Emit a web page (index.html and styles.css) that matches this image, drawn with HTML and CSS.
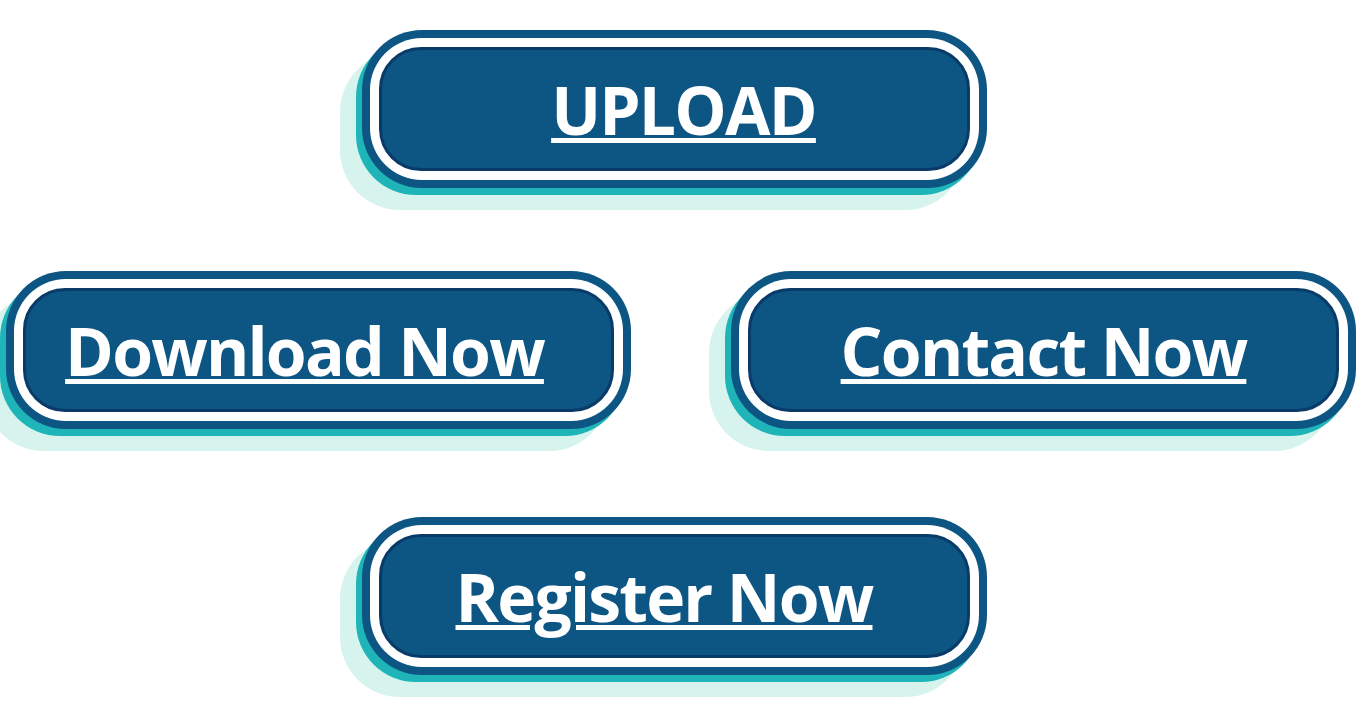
FILE: index.html
```html
<!DOCTYPE html>
<html>
<head>
<meta charset="utf-8">
<link rel="stylesheet" href="styles.css">
</head>
<body>
<main class="page">
  <div class="row row-top">
    <a class="btn" href="#"><span class="ring"><span class="face"><span class="label label-upload">UPLOAD</span></span></span></a>
  </div>
  <div class="row row-mid">
    <a class="btn" href="#"><span class="ring"><span class="face"><span class="label label-download">Download Now</span></span></span></a>
    <a class="btn" href="#"><span class="ring"><span class="face"><span class="label label-contact">Contact Now</span></span></span></a>
  </div>
  <div class="row row-bottom">
    <a class="btn" href="#"><span class="ring"><span class="face"><span class="label label-register">Register Now</span></span></span></a>
  </div>
</main>
</body>
</html>
```
FILE: styles.css
```css
html, body {
  margin: 0;
  padding: 0;
  background: #ffffff;
}
.page {
  display: flex;
  flex-direction: column;
  padding-top: 30px;
  width: 1361px;
  height: 704px;
  box-sizing: border-box;
  overflow: hidden;
}
.row {
  display: flex;
}
.row-top {
  padding-left: 362px;
}
.row-mid {
  margin-top: 83px;
  padding-left: 6px;
  gap: 100px;
}
.row-bottom {
  margin-top: 88px;
  padding-left: 362px;
}
.btn {
  display: block;
  width: 625px;
  height: 158px;
  box-sizing: border-box;
  padding: 8px;
  border-radius: 60px;
  background: #0d5583;
  box-shadow: -6px 7px 0 0 #1eb4b8, -22px 22px 0 0 #d6f3ed;
  text-decoration: none;
}
.ring {
  display: block;
  height: 100%;
  box-sizing: border-box;
  padding: 9px;
  border-radius: 52px;
  background: #ffffff;
}
.face {
  display: flex;
  align-items: center;
  justify-content: center;
  height: 100%;
  box-sizing: border-box;
  border: 3px solid #0a3b68;
  border-radius: 42px;
  background: #0d5583;
}
.label {
  font-family: "Open Sans", "Liberation Sans", sans-serif;
  font-weight: 700;
  font-size: 66px;
  letter-spacing: -1.8px;
  line-height: 1;
  color: #ffffff;
  text-decoration: underline;
  text-decoration-thickness: 5px;
  text-underline-offset: 3px;
  white-space: nowrap;
}
.label-upload { margin-left: 18px; }
.label-download { margin-left: -28px; }
.label-contact { margin-left: 0; }
.label-register { margin-left: -21px; }
```
